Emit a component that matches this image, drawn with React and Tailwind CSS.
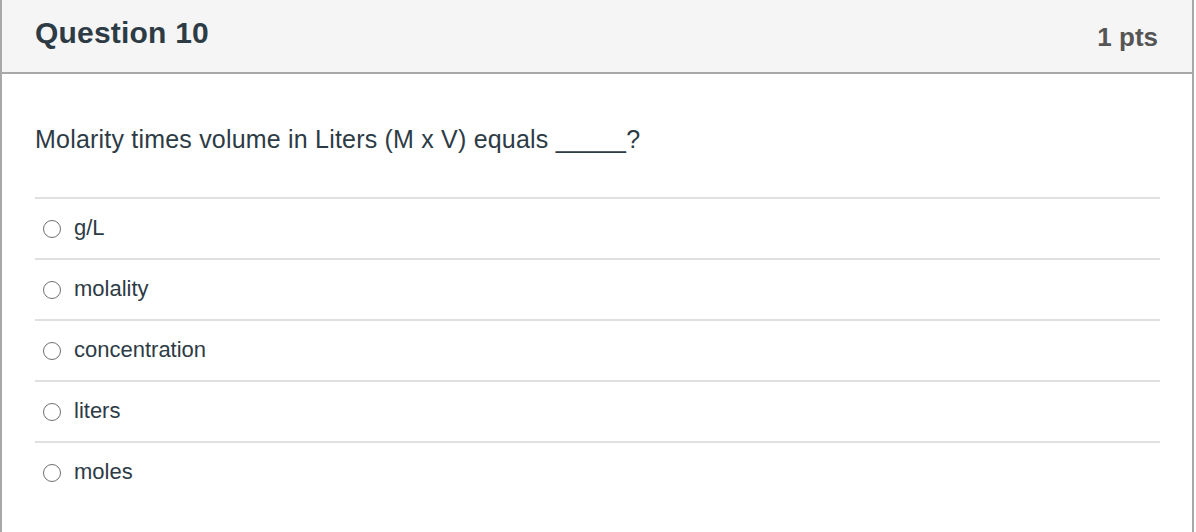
export default function App() {
  const options = ["g/L", "molality", "concentration", "liters", "moles"];

  return (
    <div className="w-[1196px] h-[532px] bg-white overflow-hidden" style={{ fontFamily: '"Liberation Sans", Arial, sans-serif' }}>
      <div className="w-[1194px] h-full border-l-2 border-r-2 border-[#a8a8a8]">
        <div className="h-[74px] bg-[#f5f5f5] border-b-2 border-[#a8a8a8] flex items-center justify-between pl-[33px] pr-[34px]">
          <h2 className="text-[30px] font-bold text-[#2d3b45] leading-none tracking-[0.2px] -mt-[6px]">Question 10</h2>
          <div className="text-[26px] font-bold text-[#555555] leading-none mt-[2px]">1 pts</div>
        </div>

        <div className="pl-[33px] pr-[32px]">
          <p className="pt-[50px] pb-[43px] text-[25px] leading-[30px] tracking-[0.2px] text-[#2d3b45]">
            Molarity times volume in Liters (M x V) equals _____?
          </p>

          <div>
            {options.map((o) => (
              <label key={o} className="h-[61px] border-t-2 border-[#e0e0e0] flex items-center">
                <span className="ml-[8px] w-[18px] h-[18px] rounded-full border-[1.5px] border-[#707070] bg-white shrink-0" />
                <span className="ml-[13px] text-[22px] text-[#2d3b45] leading-none -mt-[1px]">{o}</span>
              </label>
            ))}
          </div>
        </div>
      </div>
    </div>
  );
}
